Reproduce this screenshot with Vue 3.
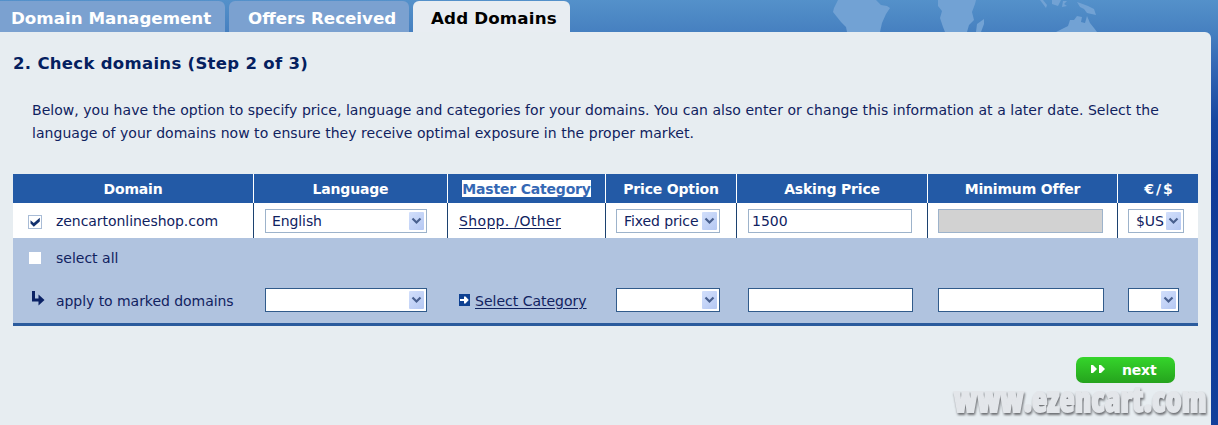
<script setup>
import { ref } from 'vue'

const tabs = [
  { label: 'Domain Management', name: 'manage' },
  { label: 'Offers Received', name: 'offers' },
  { label: 'Add Domains', name: 'add' },
]
const active = ref('add')

const columns = [
  'Domain',
  'Language',
  'Master Category',
  'Price Option',
  'Asking Price',
  'Minimum Offer',
  '€/$',
]

const chevron = 'M3.5 6.5 L7.5 10.5 L11.5 6.5'
const checked = ref(true)
const askingPrice = ref('1500')
</script>

<template>
  <div class="page">
    <!-- Continents behind the tab bar -->
    <svg class="map" viewBox="0 0 408 32" width="408" height="32">
      <path
        d="M28 0 L24 8 L23 12 L27 17 L31 22 L36 27 L37 32 H70 L72 23 L76 14 L80 8 L77 6 L71 5 L66 0 Z"
      />
      <path
        d="M128 0 L128 6 L132 11 L130 18 L133 27 L135 32 H157 L159 25 L164 20 L162 12 L165 4 L166 0 Z"
      />
      <path d="M174 19 L167 24 L166 32 H171 L174 24 Z" />
      <path d="M230 0 L236 8 L237 5 L233 0 Z M242 0 V4 L248 6 L251 0 Z M253 1 L252 7 L257 6 L254 4 L257 1 Z" />
      <path d="M267 2 L270 7 L274 9 L277 13 L286 15 L284 9 L278 6 L270 3 Z" />
      <path d="M246 32 L258 26 L260 20 L264 20 L267 16 L272 17 L271 22 L275 23 L277 16 L280 23 L284 28 L287 32 Z" />
    </svg>

    <nav class="tabs">
      <a
        v-for="tab in tabs"
        :key="tab.name"
        class="tab"
        :class="[tab.name, { active: active === tab.name }]"
        @click="active = tab.name"
        ><span>{{ tab.label }}</span></a
      >
    </nav>

    <main class="panel">
      <h1><span>2. Check domains (Step 2 of 3)</span></h1>
      <p class="intro">
        <span
          >Below, you have the option to specify price, language and categories for your domains. You
          can also enter or change this information at a later date. Select the</span
        ><br />
        <span
          >language of your domains now to ensure they receive optimal exposure in the proper
          market.</span
        >
      </p>

      <div class="grid head">
        <div v-for="col in columns" :key="col" class="cell">
          <span :class="{ marked: col === 'Master Category' }">{{ col }}</span>
        </div>
      </div>

      <div class="grid row">
        <div class="cell first">
          <button class="check boxed" @click="checked = !checked">
            <svg v-if="checked" viewBox="0 0 12 12" width="12" height="12">
              <path d="M1.5 4.2 L4.8 7 L10.8 1.8 V5.4 L4.8 10.8 L1.5 7.6 Z" fill="#12306e" />
            </svg>
          </button>
          <span class="domain">zencartonlineshop.com</span>
        </div>
        <div class="cell">
          <div class="select wide">
            <span>English</span>
            <svg class="drop" viewBox="0 0 15 18"><path :d="chevron" /></svg>
          </div>
        </div>
        <div class="cell"><a class="link chosen">Shopp. /Other</a></div>
        <div class="cell">
          <div class="select price">
            <span>Fixed price</span>
            <svg class="drop" viewBox="0 0 15 18"><path :d="chevron" /></svg>
          </div>
        </div>
        <div class="cell"><input v-model="askingPrice" class="field" /></div>
        <div class="cell"><input class="field" disabled /></div>
        <div class="cell">
          <div class="select money">
            <span>$US</span>
            <svg class="drop" viewBox="0 0 15 18"><path :d="chevron" /></svg>
          </div>
        </div>
      </div>

      <div class="foot">
        <div class="all">
          <button class="check"></button>
          <span>select all</span>
        </div>
        <div class="grid apply">
          <div class="cell first">
            <svg class="turn" viewBox="0 0 13 15" width="13" height="15">
              <path d="M0 0 H3 V7.5 H6.5 V3.5 L12.5 9 L6.5 14.5 V10.5 H0 Z" fill="#0b2265" />
            </svg>
            <span>apply to marked domains</span>
          </div>
          <div class="cell">
            <div class="select wide"><svg class="drop" viewBox="0 0 15 18"><path :d="chevron" /></svg></div>
          </div>
          <div class="cell">
            <svg class="go" viewBox="0 0 11 12" width="11" height="12">
              <rect width="11" height="12" fill="#0d4091" />
              <path d="M1 5 H5 V2.5 H6.5 L9.8 6 L6.5 9.5 H5 V7 H1 Z" fill="#fff" />
            </svg>
            <a class="link">Select Category</a>
          </div>
          <div class="cell">
            <div class="select price"><svg class="drop" viewBox="0 0 15 18"><path :d="chevron" /></svg></div>
          </div>
          <div class="cell"><input class="field" /></div>
          <div class="cell"><input class="field" /></div>
          <div class="cell">
            <div class="select money"><svg class="drop" viewBox="0 0 15 18"><path :d="chevron" /></svg></div>
          </div>
        </div>
      </div>

      <div class="actions">
        <button class="next">
          <svg viewBox="0 0 14 8" width="14" height="8">
            <path d="M0 0 H2 L6 4 L2 8 H0 Z M8 0 H10 L14 4 L10 8 H8 Z" fill="#fff" />
          </svg>
          <span>next</span>
        </button>
      </div>
    </main>

    <div class="watermark">www.ezencart.com</div>
  </div>
</template>

<style>
body {
  margin: 0;
  overflow: hidden;
}
</style>

<style scoped>
.page {
  position: relative;
  width: 1218px;
  height: 425px;
  overflow: hidden;
  background: linear-gradient(#5491ca 0, #4680c0 32px, #3468b5 65px, #1847a0 120px, #123b98 180px, #123f9b 100%);
  font-family: Verdana, 'DejaVu Sans', sans-serif;
  font-size: 14px;
  color: #10225f;
}

.page * {
  box-sizing: border-box;
}

.page span,
.link {
  white-space: nowrap;
}

.map {
  position: absolute;
  left: 810px;
  top: 0;
  fill: #72a2d4;
}

.tabs {
  display: flex;
  gap: 4px;
  height: 32px;
  padding-top: 1px;
}

.tab {
  display: flex;
  align-items: center;
  height: 31px;
  padding-top: 3px;
  border-radius: 6px 6px 0 0;
  background: #7ba1d0;
  color: #fff;
  font-size: 16.7px;
  font-weight: bold;
  cursor: pointer;
}

.manage {
  width: 225px;
  padding-left: 11px;
  border-top-left-radius: 0;
}

.offers {
  width: 180px;
  padding-left: 19px;
}

.add {
  width: 157px;
  padding-left: 18px;
  letter-spacing: 0.15px;
}

.tab.active {
  background: #e8edf2;
  color: #000;
}

.panel {
  width: 1211px;
  height: 393px;
  padding: 0 13px;
  border-top-right-radius: 6px;
  background: #e7edf1;
}

h1 {
  margin: 0;
  padding-top: 20px;
  height: 67px;
  font-size: 16.5px;
  letter-spacing: 0.3px;
  line-height: 23px;
  color: #04205f;
}

.intro {
  height: 75px;
  margin: 0;
  padding-left: 19px;
  line-height: 23px;
  letter-spacing: 0.038px;
}

.grid {
  display: grid;
  grid-template-columns: 241px 194px 158px 131px 191px 190px 80px;
  width: 1185px;
}

.cell {
  display: flex;
  align-items: center;
  padding-left: 11px;
}

.head {
  height: 29px;
  background: #235aa6;
  color: #fff;
  font-weight: bold;
  letter-spacing: -0.18px;
}

.head .cell {
  justify-content: center;
  padding-left: 0;
  border-right: 1px solid #fff;
}

.head .cell:last-child {
  padding-left: 3px;
  letter-spacing: 2px;
}

.marked {
  height: 17px;
  line-height: 18px;
  background: #fff;
  color: #3568b4;
}

.row {
  height: 35px;
  background: #fff;
}

.row .cell {
  border-right: 1px solid #1c4270;
}

.grid .cell:last-child {
  border-right: 0;
}

.row .first,
.apply .first {
  gap: 14px;
  padding-left: 15px;
  letter-spacing: -0.05px;
}

.row .cell:nth-child(4),
.apply .cell:nth-child(4),
.row .cell:nth-child(6),
.apply .cell:nth-child(6),
.row .cell:nth-child(7),
.apply .cell:nth-child(7) {
  padding-left: 10px;
}

.check {
  width: 12px;
  height: 12px;
  padding: 0;
  border: 0;
  background: #fff;
}

.check.boxed {
  width: 14px;
  height: 14px;
  margin-top: 3px;
  border: 1px solid #a9bcd6;
}

.check svg {
  display: block;
}

.select {
  display: flex;
  align-items: center;
  justify-content: space-between;
  height: 24px;
  padding: 0 2px 0 6px;
  border: 1px solid #9db3cb;
  background: #fff;
  letter-spacing: -0.1px;
}

.wide {
  width: 162px;
}

.price {
  width: 104px;
  padding-left: 7px;
}

.money {
  width: 56px;
  padding-left: 7px;
}

.apply .money {
  width: 51px;
}

.drop {
  flex: none;
  width: 15px;
  height: 18px;
  margin-left: auto;
  border-radius: 1px;
  background: linear-gradient(135deg, #d2dffb, #b5c8f3);
}

.drop path {
  fill: none;
  stroke: #49608f;
  stroke-width: 2.2;
}

.field {
  width: 164px;
  height: 24px;
  padding: 0 3px;
  border: 1px solid #9db3cb;
  border-radius: 0;
  background: #fff;
  color: #10225f;
  font: inherit;
}

.row .cell:nth-child(6) .field {
  width: 165px;
}

.field:disabled {
  background: #d2d2d2;
}

.apply .select,
.apply .field {
  border-color: #315b8b;
}

.apply .field {
  width: 165px;
}

.apply .cell:nth-child(6) .field {
  width: 166px;
}

.link {
  color: #10225f;
  text-decoration: underline;
  text-underline-offset: 2px;
}

.chosen {
  letter-spacing: 0.35px;
}

.foot {
  width: 1185px;
  height: 88px;
  border-bottom: 3px solid #2b5b9d;
  background: #b0c3df;
}

.all {
  display: flex;
  align-items: center;
  gap: 15px;
  height: 40px;
  padding-left: 16px;
}

.apply {
  height: 44px;
}

.apply .first {
  gap: 11px;
  padding-left: 19px;
}

.apply .first span,
.apply .link {
  padding-top: 2px;
}

.turn {
  margin-top: -4px;
}

.go {
  margin-right: 5px;
}

.actions {
  display: flex;
  justify-content: flex-end;
  padding: 31px 23px 0 0;
}

.next {
  display: flex;
  align-items: center;
  gap: 17px;
  width: 99px;
  height: 26px;
  padding: 0 0 0 15px;
  border: 0;
  border-radius: 7px;
  background: linear-gradient(#35d52b, #25a31d);
  color: #fff;
  font: bold 14px Verdana, 'DejaVu Sans', sans-serif;
  letter-spacing: -0.2px;
}

.next svg {
  margin-top: -2px;
}

.watermark {
  position: absolute;
  left: 954px;
  top: 374px;
  height: 50px;
  font: 800 36px/50px 'Open Sans', sans-serif;
  font-stretch: 75%;
  white-space: nowrap;
  transform: scaleX(0.873);
  transform-origin: 0 0;
  color: #e3e6ea;
  -webkit-text-stroke: 1.8px #e3e6ea;
  filter: drop-shadow(1px 2px 1px #6c6e72);
}
</style>
